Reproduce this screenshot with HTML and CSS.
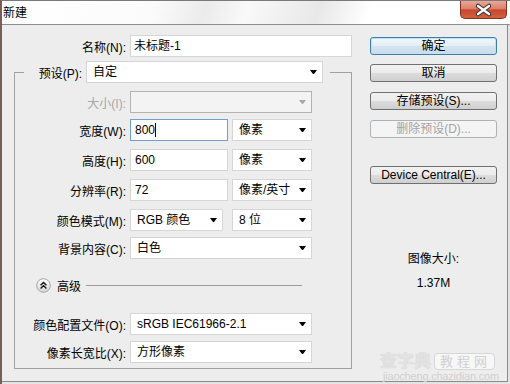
FILE: index.html
```html
<!DOCTYPE html>
<html lang="zh-CN">

<head>
    <meta charset="UTF-8">
    <title>新建</title>
    <link rel="stylesheet" href="styles.css">
</head>

<body>
    <div class="window">
        <!-- 标题栏 -->
        <div class="titlebar">
            <span class="title">新建</span>
            <div class="close">
                <svg width="45" height="18" viewBox="0 0 45 18">
                    <path d="M17 5 L28 13 M28 5 L17 13" stroke="#3a3a3a" stroke-width="4.5" stroke-linecap="round" />
                    <path d="M17 5 L28 13 M28 5 L17 13" stroke="#ffffff" stroke-width="2.2" stroke-linecap="round" />
                </svg>
            </div>
        </div>

        <div class="client">
            <!-- 左侧表单 -->
            <div class="main">
                <div class="row name-row">
                    <span class="lbl lbl-top">名称(N):</span>
                    <div class="field w-name">未标题-1</div>
                </div>

                <fieldset class="group">
                    <legend class="preset">
                        <div class="preset-row">
                            <span class="lbl-preset">预设(P):</span>
                            <div class="field select w-preset">自定<i class="arrow"></i></div>
                        </div>
                    </legend>

                    <div class="row r-size">
                        <span class="lbl off">大小(I):</span>
                        <div class="field select w-full disabled"><span></span><i class="arrow"></i></div>
                    </div>
                    <div class="row r-width">
                        <span class="lbl">宽度(W):</span>
                        <div class="field w-num focus">800<span class="caret"></span></div>
                        <div class="field select w-unit">像素<i class="arrow"></i></div>
                    </div>
                    <div class="row r-gap8">
                        <span class="lbl">高度(H):</span>
                        <div class="field w-num">600</div>
                        <div class="field select w-unit">像素<i class="arrow"></i></div>
                    </div>
                    <div class="row r-gap8">
                        <span class="lbl">分辨率(R):</span>
                        <div class="field w-num">72</div>
                        <div class="field select w-unit">像素/英寸<i class="arrow"></i></div>
                    </div>
                    <div class="row r-gap8">
                        <span class="lbl">颜色模式(M):</span>
                        <div class="field select w-mode">RGB 颜色<i class="arrow"></i></div>
                        <div class="field select w-unit w-bits">8 位<i class="arrow"></i></div>
                    </div>
                    <div class="row r-gap6">
                        <span class="lbl">背景内容(C):</span>
                        <div class="field select w-full">白色<i class="arrow"></i></div>
                    </div>

                    <div class="adv">
                        <svg width="15" height="15" viewBox="0 0 15 15">
                            <defs>
                                <linearGradient id="g" x1="0" y1="0" x2="0" y2="1">
                                    <stop offset="0" stop-color="#ffffff" />
                                    <stop offset="1" stop-color="#d6d6d6" />
                                </linearGradient>
                            </defs>
                            <circle cx="7.5" cy="7.5" r="6.8" fill="url(#g)" stroke="#a3a3a3" />
                            <path d="M4.6 7.2 L7.5 4.4 L10.4 7.2 M4.6 10.4 L7.5 7.6 L10.4 10.4" fill="none" stroke="#111" stroke-width="1.4" />
                        </svg>
                        <span class="adv-text">高级</span>
                        <span class="adv-line"></span>
                    </div>

                    <div class="row r-profile">
                        <span class="lbl">颜色配置文件(O):</span>
                        <div class="field select w-full">sRGB IEC61966-2.1<i class="arrow"></i></div>
                    </div>
                    <div class="row r-gap6">
                        <span class="lbl">像素长宽比(X):</span>
                        <div class="field select w-full">方形像素<i class="arrow"></i></div>
                    </div>
                </fieldset>
            </div>

            <!-- 右侧按钮 -->
            <div class="side">
                <div class="btn default">确定</div>
                <div class="btn b-9">取消</div>
                <div class="btn b-10">存储预设(S)...</div>
                <div class="btn b-10 disabled">删除预设(D)...</div>
                <div class="btn b-28">Device Central(E)...</div>
                <div class="info">
                    <div>图像大小:</div>
                    <div>1.37M</div>
                </div>
            </div>
        </div>

        <!-- 水印 -->
        <div class="watermark">
            <div class="wm-top">
                <span class="wm-big">查字典</span>
                <span class="wm-box">教程网</span>
            </div>
            <div class="wm-url">jiaocheng.chazidian.com</div>
        </div>
    </div>
</body>

</html>
```

FILE: styles.css
```css
/* 全局 */
body {
    margin: 0;
    background: #e4e4e4;
    font-family: "Liberation Sans", "Noto Sans CJK SC", sans-serif;
    font-size: 12px;
    color: #000;
}

.window {
    position: relative;
    width: 510px;
    height: 384px;
    box-sizing: border-box;
    border-left: 2px solid #7b5d57;
    border-top: 1px solid #7a7a7a;
    background: #e4e4e4;
    overflow: hidden;
}

/* 标题栏 */
.titlebar {
    height: 23px;
    border-bottom: 1px solid #8e8e8e;
    display: flex;
    justify-content: space-between;
    align-items: flex-start;
    background: linear-gradient(110deg, #ffffff 0%, #fbfbfb 30%, #ebebeb 40%, #f9f9f9 48%, #e8e8e8 62%, #ffffff 72%, #ffffff 100%);
}

.title {
    padding-left: 1px;
    line-height: 24px;
}

.close {
    width: 47px;
    height: 18px;
    margin-right: 3px;
    box-sizing: border-box;
    border: 1px solid #85311f;
    border-top: none;
    border-radius: 0 0 5px 5px;
    background: linear-gradient(#eaa797 0%, #dd806b 45%, #c8472d 52%, #d2603f 100%);
}

.close svg {
    display: block;
}

/* 客户区 */
.client {
    height: 357px;
    box-sizing: border-box;
    margin-right: 2px;
    border-right: 1px solid #8a8a8a;
    border-bottom: 1px solid #8a8a8a;
    background: #ededed;
    display: flex;
    padding: 10px 0 0 12px;
}

.main {
    width: 338px;
}

.row {
    display: flex;
    align-items: center;
    height: 22px;
}

.lbl {
    flex: none;
    width: 115px;
    box-sizing: border-box;
    padding-right: 4px;
    text-align: right;
    white-space: nowrap;
}

.lbl-top {
    width: 116px;
}

.lbl.off {
    color: #a6a6a6;
}

.field {
    box-sizing: border-box;
    height: 22px;
    border: 1px solid #d6d6d6;
    background: #fff;
    padding-left: 4px;
    line-height: 20px;
    white-space: nowrap;
}

.field.focus {
    border-color: #6e9fd6;
}

.caret {
    display: inline-block;
    width: 1px;
    height: 14px;
    background: #000;
    vertical-align: -3px;
}

.select {
    display: flex;
    justify-content: space-between;
    align-items: center;
    padding: 0 5px 0 6px;
}

.arrow {
    width: 1px;
    height: 0;
    border-left: 3px solid transparent;
    border-right: 3px solid transparent;
    border-top: 4px solid #000;
}

.select.disabled {
    background: #f3f3f3;
    border-color: #b3b3b3;
}

.select.disabled .arrow {
    border-top-color: #a8a8a8;
}

.w-name {
    width: 224px;
    padding-left: 3px;
}

.w-preset {
    width: 237px;
}

.w-full {
    width: 182px;
}

.w-num {
    width: 98px;
}

.w-unit {
    width: 80px;
    margin-left: 4px;
}

.w-mode {
    width: 93px;
}

.w-bits {
    margin-left: 9px;
}

/* 预设分组 */
.group {
    margin: 4px 0 0 0;
    padding: 0 0 5px 0;
    border: 1px solid #a2a2a2;
    min-inline-size: 0;
}

.preset {
    margin-left: 9px;
    padding: 0 7px 0 12px;
}

.preset-row {
    display: flex;
    align-items: center;
}

.lbl-preset {
    width: 50px;
    box-sizing: border-box;
    padding-right: 4px;
    text-align: right;
    white-space: nowrap;
}

.r-size {
    margin-top: 8px;
}

.r-width {
    margin-top: 6px;
}

.r-gap8 {
    margin-top: 8px;
}

.r-gap6 {
    margin-top: 6px;
}

.r-profile {
    margin-top: 20px;
}

.adv {
    display: flex;
    align-items: center;
    height: 15px;
    margin-top: 19px;
    padding-left: 21px;
}

.adv svg {
    display: block;
}

.adv-text {
    margin-left: 6px;
}

.adv-line {
    width: 216px;
    height: 1px;
    margin-left: 5px;
    background: #9c9c9c;
}

/* 右侧按钮 */
.side {
    width: 127px;
    margin-left: 18px;
    padding-top: 2px;
}

.btn {
    box-sizing: border-box;
    height: 18px;
    border: 1px solid #707070;
    border-radius: 3px;
    background: linear-gradient(#f2f2f2 0%, #ebebeb 50%, #dddddd 51%, #cfcfcf 100%);
    text-align: center;
    line-height: 16px;
    white-space: nowrap;
}

.btn.default {
    border-color: #3c7fb1;
    background: linear-gradient(#f2f8fc 0%, #e4eef5 50%, #d5e3ee 51%, #cbdcea 100%);
    box-shadow: inset 0 0 0 1px #bfe1f5;
}

.btn.disabled {
    border-color: #adb2b5;
    background: #f4f4f4;
    color: #a3a3a3;
}

.b-9 {
    margin-top: 9px;
}

.b-10 {
    margin-top: 10px;
}

.b-28 {
    margin-top: 28px;
}

.info {
    margin-top: 63px;
    text-align: center;
    line-height: 24px;
}

/* 水印 */
.watermark {
    position: absolute;
    left: 378px;
    top: 352px;
    pointer-events: none;
    white-space: nowrap;
}

.wm-top {
    display: flex;
    align-items: center;
    height: 17px;
}

.wm-big {
    font-size: 17px;
    line-height: 17px;
    font-weight: bold;
    color: #e2e2e2;
    text-shadow: 0 0 1px #c9c9c9;
}

.wm-box {
    margin-left: 3px;
    padding: 0 3px 0 5px;
    border: 1px solid #d6d6d6;
    border-radius: 4px;
    background: #f7f7f7;
    color: #cfcfcf;
    font-size: 13px;
    letter-spacing: 4px;
    line-height: 15px;
}

.wm-url {
    font-size: 11px;
    letter-spacing: -0.2px;
    color: #d0d0d0;
    line-height: 12px;
    padding-left: 3px;
}
```
